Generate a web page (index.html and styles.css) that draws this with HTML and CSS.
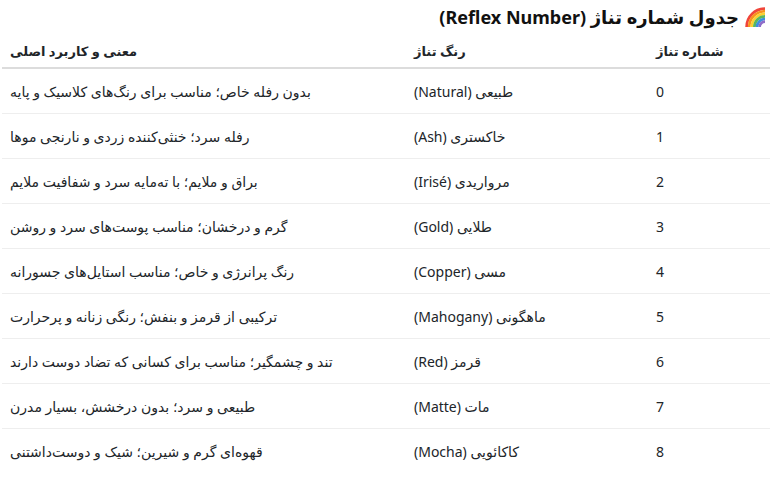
FILE: index.html
```html
<!DOCTYPE html>
<html lang="fa" dir="rtl">
<head>
<meta charset="utf-8">
<title>جدول شماره تناژ</title>
<link rel="stylesheet" href="styles.css">
</head>
<body>
<div class="page">
  <h2 class="title"><svg class="rainbow" viewBox="0 0 20 20" width="20" height="20" aria-hidden="true">
    <g fill="none" stroke-width="2.7">
      <path d="M1.6 20 A18.4 18.4 0 0 1 20 1.6" stroke="#f0453a"/>
      <path d="M4.2 20 A15.8 15.8 0 0 1 20 4.2" stroke="#f7941d"/>
      <path d="M6.8 20 A13.2 13.2 0 0 1 20 6.8" stroke="#fbd033"/>
      <path d="M9.4 20 A10.6 10.6 0 0 1 20 9.4" stroke="#5cb85c"/>
      <path d="M12 20 A8 8 0 0 1 20 12" stroke="#3d8fe0"/>
      <path d="M14.6 20 A5.4 5.4 0 0 1 20 14.6" stroke="#8e6cc9"/>
    </g>
  </svg> جدول شماره تناژ (Reflex Number)</h2>
  <table class="tbl">
    <thead>
      <tr><th class="c1">شماره تناژ</th><th class="c2">رنگ تناژ</th><th class="c3">معنی و کاربرد اصلی</th></tr>
    </thead>
    <tbody>
      <tr><td>0</td><td>طبیعی (Natural)</td><td>بدون رفله خاص؛ مناسب برای رنگ‌های کلاسیک و پایه</td></tr>
      <tr><td>1</td><td>خاکستری (Ash)</td><td>رفله سرد؛ خنثی‌کننده زردی و نارنجی موها</td></tr>
      <tr><td>2</td><td>مرواریدی (Irisé)</td><td>براق و ملایم؛ با ته‌مایه سرد و شفافیت ملایم</td></tr>
      <tr><td>3</td><td>طلایی (Gold)</td><td>گرم و درخشان؛ مناسب پوست‌های سرد و روشن</td></tr>
      <tr><td>4</td><td>مسی (Copper)</td><td>رنگ پرانرژی و خاص؛ مناسب استایل‌های جسورانه</td></tr>
      <tr><td>5</td><td>ماهگونی (Mahogany)</td><td>ترکیبی از قرمز و بنفش؛ رنگی زنانه و پرحرارت</td></tr>
      <tr><td>6</td><td>قرمز (Red)</td><td>تند و چشمگیر؛ مناسب برای کسانی که تضاد دوست دارند</td></tr>
      <tr><td>7</td><td>مات (Matte)</td><td>طبیعی و سرد؛ بدون درخشش، بسیار مدرن</td></tr>
      <tr><td>8</td><td>کاکائویی (Mocha)</td><td>قهوه‌ای گرم و شیرین؛ شیک و دوست‌داشتنی</td></tr>
    </tbody>
  </table>
</div>
</body>
</html>
```
FILE: styles.css
```css
html, body {
  margin: 0;
  padding: 0;
  background: #ffffff;
}
body {
  font-family: "Noto Sans", "DejaVu Sans", sans-serif;
  color: #212529;
}
.page {
  padding: 0 5px 0 2px;
}
.title {
  margin: 0;
  padding: 2px 5px 0 0;
  height: 31px;
  box-sizing: border-box;
  font-size: 18px;
  font-weight: 700;
  line-height: 26px;
  color: #111111;
  display: flex;
  align-items: center;
  gap: 6px;
}
.rainbow {
  flex: none;
}
.tbl {
  width: 768px;
  border-collapse: collapse;
  font-size: 14px;
}
.tbl th, .tbl td {
  text-align: left;
  padding: 0 8px;
  vertical-align: middle;
}
.tbl th {
  font-weight: 700;
  font-size: 13px;
  height: 33px;
  padding-top: 3px;
  border-bottom: 2px solid #dcdcdc;
}
.tbl td {
  height: 44px;
  border-bottom: 1px solid #eeeeee;
}
.tbl tbody tr:last-child td {
  border-bottom: none;
}
.c1 { width: 106px; }
.c2 { width: 226px; }
```
